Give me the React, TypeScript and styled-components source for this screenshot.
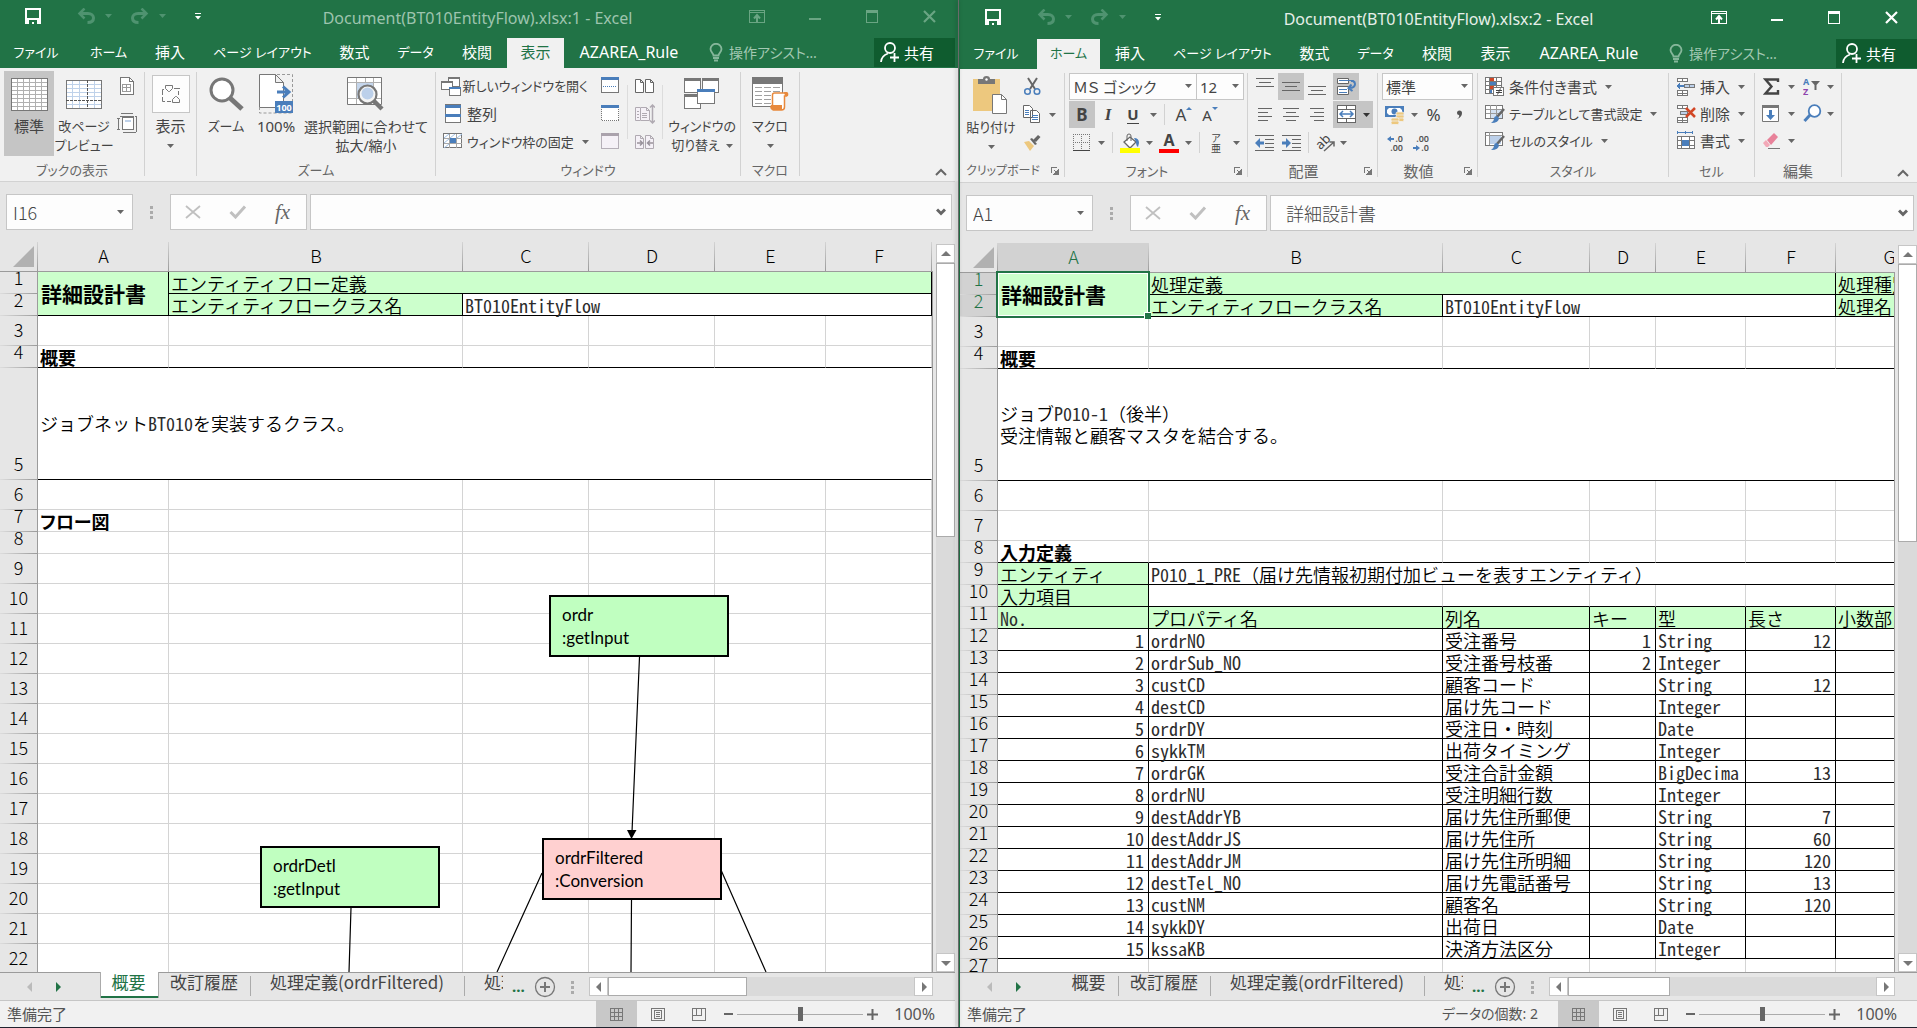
import React from "react";
import styled, { createGlobalStyle, css } from "styled-components";

/* ---------- theme values ---------- */
const ui = '"Noto Sans", "Noto Sans CJK JP", sans-serif';
const jp = '"Noto Sans CJK JP", "Noto Sans", sans-serif';
const mono = '"Noto Sans Mono CJK JP", "Liberation Mono", "Noto Sans CJK JP", monospace';
const green = "#217346";
const grey = "#777777";
const blue = "#4a7ebb";

const Global = createGlobalStyle`
  * { box-sizing: border-box; }
  body { margin: 0; font-family: ${ui}; font-size: 15px; color: #444; overflow: hidden; }
  button, input, select { font: inherit; color: inherit; margin: 0; }
  button { border: 0; padding: 0; background: none; white-space: nowrap; }
  svg { display: block; flex: none; }
`;

/* ---------- windows ---------- */
const Desktop = styled.div`
  height: 100vh;
  display: grid;
  grid-template-columns: minmax(0, 1fr) 1px minmax(0, 1fr);
  padding-bottom: 1px;
  background: #20222e;
`;
const Divider = styled.div`
  background: #6a6a6a;
  box-shadow: -1px 0 4px rgba(0, 0, 0, 0.45);
  z-index: 2;
`;
const WindowFrame = styled.section<{ $active: boolean }>`
  display: flex;
  flex-direction: column;
  min-height: 0;
  min-width: 0;
  overflow: hidden;
  ${(p) =>
    p.$active
      ? css`
          padding-top: 1px;
          border-left: 1px solid ${green};
          background: ${green};
        `
      : css`
          padding-right: 3px;
          background: linear-gradient(${green} 68px, #f1f1f1 68px 181px, #e6e6e6 181px);
        `}
`;

/* ---------- title bar ---------- */
const TitleBar = styled.header`
  flex: none;
  height: 38px;
  display: grid;
  grid-template-columns: 210px 1fr 220px;
  background: ${green};
`;
const QuickAccess = styled.div`
  display: flex;
  align-items: center;
  padding: 0 0 6px 25px;
  gap: 0;
`;
const Slot = styled.button<{ $w: number }>`
  flex: none;
  width: ${(p) => p.$w}px;
  height: 20px;
  display: flex;
  align-items: center;
`;
const LaunchButton = styled(Slot)`
  justify-content: center;
`;
const Title = styled.h1<{ $active: boolean }>`
  margin: 0;
  font-size: 16px;
  font-weight: 400;
  line-height: 37px;
  text-align: center;
  white-space: nowrap;
  padding-left: 10px;
  color: ${(p) => (p.$active ? "#e6efe9" : "#9dc4ae")};
`;
const Controls = styled.div<{ $active: boolean }>`
  display: flex;
  justify-content: flex-end;
  align-items: center;
  padding: 0 18px 6px 0;
  gap: 43px;
  color: ${(p) => (p.$active ? "#ffffff" : "#6aa583")};
`;

/* ---------- ribbon tabs ---------- */
const TabBar = styled.nav`
  flex: none;
  height: 30px;
  display: flex;
  background: ${green};
  color: #ffffff;
`;
const RibbonTab = styled.button<{ $w: number; $on: boolean; $size: number }>`
  flex: none;
  width: ${(p) => p.$w}px;
  display: flex;
  justify-content: center;
  align-items: center;
  padding-bottom: 2px;
  line-height: 28px;
  font-size: ${(p) => p.$size}px;
  font-feature-settings: "palt";
  background: ${(p) => (p.$on ? "#f1f1f1" : "transparent")};
  color: ${(p) => (p.$on ? green : "#ffffff")};
  &:first-child { margin-right: 5px; }
`;
const Tell = styled.button`
  display: flex;
  align-items: center;
  gap: 6px;
  margin-left: 15px;
  padding-bottom: 2px;
  font-size: 14px;
  font-feature-settings: "palt";
  color: #a3c9b3;
`;
const Share = styled.button`
  margin-left: auto;
  width: 81px;
  margin-bottom: 1px;
  display: flex;
  align-items: center;
  gap: 4px;
  padding: 0 0 1px 6px;
  background: #0f5c2f;
  color: #ffffff;
`;

/* ---------- ribbon ---------- */
const RibbonBar = styled.div`
  flex: none;
  height: 114px;
  display: flex;
  background: #f1f1f1;
  border-bottom: 1px solid #d2d2d2;
`;
const Sep = styled.span`
  flex: none;
  width: 1px;
  margin: 4px 0 5px;
  background: #d2d2d2;
`;
const ShortSep = styled.span`
  flex: none;
  width: 1px;
  height: 54px;
  margin: 14px 3px 17px;
  background: #dcdcdc;
`;
const GroupBox = styled.section<{ $w: number }>`
  flex: none;
  width: ${(p) => p.$w}px;
  display: flex;
  flex-direction: column;
`;
const GroupBody = styled.div<{ $pad: number }>`
  flex: 1;
  display: flex;
  align-items: flex-start;
  padding: 3px 0 0 ${(p) => p.$pad}px;
`;
const GroupLabel = styled.footer<{ $size: number }>`
  height: 22px;
  display: flex;
  align-items: center;
  font-size: ${(p) => p.$size}px;
  line-height: 22px;
  font-feature-settings: "palt";
  color: #666;
  & > span { flex: 1; text-align: center; white-space: nowrap; }
`;
const BigButton = styled.button<{ $w: number; $on?: boolean; $size?: number }>`
  flex: none;
  width: ${(p) => p.$w}px;
  height: 85px;
  display: flex;
  flex-direction: column;
  align-items: center;
  background: ${(p) => (p.$on ? "#c5c5c5" : "transparent")};
  font-size: ${(p) => p.$size ?? 15}px;
  line-height: 19px;
  font-feature-settings: "palt";
`;
const IconArea = styled.span`
  height: 46px;
  display: flex;
  align-items: center;
`;
const Line = styled.span`
  height: 19px;
  display: flex;
  align-items: center;
  gap: 6px;
`;
const Framed = styled.span`
  width: 38px;
  height: 38px;
  display: flex;
  align-items: center;
  justify-content: center;
  background: #fdfdfd;
  border: 1px solid #c6c6c6;
`;
const Stack = styled.div<{ $w?: number; $gap?: number }>`
  flex: none;
  width: ${(p) => (p.$w ? p.$w + "px" : "auto")};
  display: flex;
  flex-direction: column;
  gap: ${(p) => p.$gap ?? 1}px;
  padding-top: 1px;
`;
const Row = styled.div`
  display: flex;
  align-items: center;
  height: 27px;
`;
const Tool = styled.button<{ $w: number; $on?: boolean }>`
  flex: none;
  width: ${(p) => p.$w}px;
  height: 27px;
  display: flex;
  align-items: center;
  justify-content: center;
  gap: 6px;
  background: ${(p) => (p.$on ? "#c5c5c5" : "transparent")};
`;
const Glyph = styled.span<{ $bold?: boolean; $italic?: boolean; $under?: boolean; $size?: number }>`
  font-size: ${(p) => p.$size ?? 17}px;
  line-height: 18px;
  font-weight: ${(p) => (p.$bold ? 700 : 400)};
  font-family: ${(p) => (p.$italic ? '"Liberation Serif", serif' : ui)};
  font-style: ${(p) => (p.$italic ? "italic" : "normal")};
  border-bottom: ${(p) => (p.$under ? "1px solid #444" : "0")};
`;
const MiniSep = styled.span<{ $w: number }>`
  flex: none;
  width: ${(p) => p.$w}px;
  height: 21px;
  background: linear-gradient(#d2d2d2, #d2d2d2) center / 1px 100% no-repeat;
`;
const Gap = styled.span`
  width: 3px;
`;
const Item = styled.button<{ $size: number }>`
  height: 27px;
  display: flex;
  align-items: center;
  font-size: ${(p) => p.$size}px;
  font-feature-settings: "palt";
`;
const ItemIcon = styled.span`
  width: 28px;
  display: flex;
  justify-content: center;
`;
const ItemText = styled.span`
  padding-right: 8px;
`;
const Combo = styled.span<{ $w: number }>`
  position: relative;
  flex: none;
  width: ${(p) => p.$w}px;
  height: 27px;
  & + & { margin-left: -1px; }
  select {
    appearance: none;
    width: 100%;
    height: 27px;
    padding: 0 3px;
    border: 1px solid #c6c6c6;
    border-radius: 0;
    background: #fdfdfd;
    font-feature-settings: "palt";
  }
  svg { position: absolute; right: 5px; top: 11px; }
`;
const Collapse = styled.button`
  margin: auto 8px 5px auto;
`;

/* ---------- formula bar ---------- */
const FormulaBar = styled.div`
  flex: none;
  height: 60px;
  display: flex;
  align-items: flex-start;
  padding: 12px 3px 0 6px;
  background: #e6e6e6;
`;
const Box = styled.div<{ $w?: number }>`
  flex: ${(p) => (p.$w ? "none" : 1)};
  width: ${(p) => (p.$w ? p.$w + "px" : "auto")};
  height: 36px;
  display: flex;
  align-items: center;
  background: #fdfdfd;
  border: 1px solid #c6c6c6;
`;
const BoxInput = styled.input<{ $pad: number }>`
  flex: 1;
  min-width: 0;
  width: 0;
  height: 32px;
  border: 0;
  outline: 0;
  background: transparent;
  padding: 0 0 0 ${(p) => p.$pad}px;
  font-family: ${jp};
  font-size: 18px;
  font-weight: 300;
`;
const BoxButton = styled.button<{ $w: number }>`
  flex: none;
  width: ${(p) => p.$w}px;
  height: 34px;
  display: flex;
  align-items: center;
  justify-content: center;
  color: #666;
`;
const Grip = styled.span<{ $w: number; $h: number }>`
  flex: none;
  width: ${(p) => p.$w}px;
  height: ${(p) => p.$h}px;
  display: flex;
  align-items: center;
  justify-content: center;
`;

/* ---------- sheet ---------- */
const SheetArea = styled.div`
  flex: 1;
  min-height: 0;
  display: flex;
  background: #e6e6e6;
  border-bottom: 1px solid #9b9b9b;
`;
const SheetPane = styled.div`
  flex: 1;
  min-width: 0;
  padding-right: 1px;
  background: linear-gradient(#e6e6e6 29px, #9b9b9b 29px);
  display: flex;
`;
const SheetView = styled.div`
  position: relative;
  flex: 1;
  min-width: 0;
  overflow: hidden;
  background: #ffffff;
`;
const Table = styled.table<{ $w: number }>`
  width: ${(p) => p.$w}px;
  table-layout: fixed;
  border-collapse: separate;
  border-spacing: 0;
  color: #000000;
`;
const ColHead = styled.th<{ $on?: boolean }>`
  height: 30px;
  padding: 0 0 4px;
  font-family: ${jp};
  font-size: 18px;
  line-height: 24px;
  font-weight: 300;
  color: ${(p) => (p.$on ? green : "#000")};
  border-bottom: 1px solid #9b9b9b;
  background: linear-gradient(#d4d4d4, #9b9b9b) right / 1px 100% no-repeat, ${(p) => (p.$on ? "#d2d2d2" : "#e6e6e6")};
`;
const Corner = styled(ColHead)`
  padding: 4px 0 3px 12px;
`;
const RowHead = styled.th<{ $on?: boolean }>`
  padding: 0 0 13px;
  vertical-align: bottom;
  font-family: ${jp};
  font-size: 18px;
  line-height: 8px;
  font-weight: 300;
  color: ${(p) => (p.$on ? green : "#000")};
  border-right: 1px solid #9b9b9b;
  background: linear-gradient(to right, #dddddd, #9b9b9b) bottom / 100% 1px no-repeat, ${(p) => (p.$on ? "#d2d2d2" : "#e6e6e6")};
`;
const Tr = styled.tr<{ $h: number }>`
  height: ${(p) => p.$h}px;
`;
const Td = styled.td<{ $fill?: boolean; $b?: boolean; $r?: boolean; $kind?: string; $sel?: boolean }>`
  padding: 1px 4px 0 2px;
  vertical-align: bottom;
  position: ${(p) => (p.$sel ? "relative" : "static")};
  white-space: pre;
  font-family: ${jp};
  font-size: 18px;
  line-height: 20px;
  font-weight: 350;
  background: ${(p) => (p.$fill ? "#ccffcc" : "#ffffff")};
  border-right: 1px solid ${(p) => (p.$r ? "#000" : "#d4d4d4")};
  border-bottom: 1px solid ${(p) => (p.$b ? "#000" : "#d4d4d4")};
  ${(p) =>
    p.$kind === "title" &&
    css`
      font-size: 21px;
      font-weight: 700;
      vertical-align: middle;
      padding: 0 0 2px 3px;
    `}
  ${(p) =>
    p.$kind === "bold" &&
    css`
      font-weight: 700;
      font-feature-settings: "palt";
    `}
  ${(p) => p.$kind === "num" && "text-align: right;"}
  ${(p) =>
    p.$kind === "note" &&
    css`
      vertical-align: middle;
      line-height: 22px;
      padding: 0 4px 2px 2px;
      border-right-color: #fff;
    `}
`;
const HalfWidth = styled.span`
  font-family: ${mono};
  font-weight: 400;
  color: #2c2c2c;
`;
const Selection = styled.span`
  position: absolute;
  inset: -2px;
  border: 2px solid ${green};
  box-shadow: inset 0 0 0 1px #ffffff;
  z-index: 1;
  &::after {
    content: "";
    position: absolute;
    right: -3px;
    bottom: -3px;
    width: 6px;
    height: 6px;
    background: ${green};
    border-left: 1px solid #fff;
    border-top: 1px solid #fff;
  }
`;
const Canvas = styled.div`
  position: absolute;
  inset: 0;
  overflow: hidden;
  pointer-events: none;
`;
const FlowNode = styled.div<{ $x: number; $y: number; $color: string }>`
  position: absolute;
  left: ${(p) => p.$x}px;
  top: ${(p) => p.$y}px;
  width: 180px;
  height: 62px;
  padding: 6px 0 0 11px;
  border: 2px solid #000;
  background: ${(p) => p.$color};
  color: #000;
  font-family: Lato, "Open Sans", sans-serif;
  font-size: 17px;
  line-height: 23px;
  white-space: pre;
`;

/* ---------- scroll bars ---------- */
const VScroll = styled.div`
  flex: none;
  width: 22px;
  padding: 2px 0 0 3px;
  display: flex;
  flex-direction: column;
`;
const HScroll = styled.div`
  flex: 1;
  height: 19px;
  display: flex;
`;
const ScrollButton = styled.button`
  flex: none;
  width: 19px;
  height: 19px;
  display: flex;
  align-items: center;
  justify-content: center;
  background: #fff;
  border: 1px solid #c6c6c6;
`;
const Track = styled.div`
  flex: 1;
  background: #dadada;
`;
const VThumb = styled.div<{ $h: number }>`
  height: ${(p) => p.$h}px;
  background: #fff;
  border: 1px solid #ababab;
`;
const HThumb = styled.div<{ $w: number }>`
  width: ${(p) => p.$w}px;
  height: 19px;
  background: #fff;
  border: 1px solid #ababab;
`;

/* ---------- sheet tabs ---------- */
const SheetTabs = styled.div`
  flex: none;
  height: 28px;
  display: flex;
  padding-right: 22px;
  background: #e6e6e6;
  border-bottom: 1px solid #c6c6c6;
`;
const NavArrows = styled.div`
  flex: none;
  width: 100px;
  display: flex;
  align-items: center;
  padding-left: 25px;
  gap: 18px;
`;
const SheetTab = styled.button<{ $w: number; $on?: boolean; $line?: boolean }>`
  flex: none;
  width: ${(p) => p.$w}px;
  height: 25px;
  font-family: ${jp};
  font-size: 17px;
  line-height: 17px;
  padding: 0 2px 8px 0;
  color: #444;
  background: ${(p) => (p.$line ? "linear-gradient(#ababab, #ababab) right 3px / 1px 20px no-repeat" : "none")};
  ${(p) =>
    p.$on &&
    css`
      height: 26px;
      margin-top: -1px;
      padding-bottom: 7px;
      position: relative;
      color: ${green};
      background: #fff;
      border: solid #ababab;
      border-width: 0 1px;
      box-shadow: inset 0 -2px 0 ${green};
    `}
`;
const TabClip = styled.button`
  flex: none;
  width: 19px;
  margin-left: 19px;
  height: 21px;
  overflow: hidden;
  text-align: left;
  font-family: ${jp};
  font-size: 17px;
  line-height: 17px;
  padding-bottom: 4px;
`;
const More = styled.button`
  flex: none;
  width: 31px;
  color: ${green};
  font-weight: 700;
  line-height: 22px;
  height: 26px;
`;
const AddSheet = styled.button`
  flex: none;
  display: flex;
  align-items: center;
  padding-top: 1px;
`;
const HArea = styled.div`
  flex: 1;
  display: flex;
  padding-top: 4px;
`;

/* ---------- status bar ---------- */
const StatusBar = styled.footer`
  flex: none;
  height: 26px;
  display: flex;
  align-items: center;
  padding: 0 20px 0 7px;
  background: #f1f1f1;
  color: #555;
  line-height: 24px;
`;
const Count = styled.span`
  margin-left: auto;
  margin-right: 20px;
  font-size: 14px;
  font-feature-settings: "palt";
`;
const ViewButton = styled.button<{ $on?: boolean }>`
  flex: none;
  width: 41px;
  height: 26px;
  display: flex;
  align-items: center;
  justify-content: center;
  background: ${(p) => (p.$on ? "#c8c8c8" : "transparent")};
`;
const ZoomStep = styled.button`
  width: 18px;
  height: 26px;
  display: flex;
  align-items: center;
  justify-content: center;
`;
const Slider = styled.input`
  appearance: none;
  width: 126px;
  height: 14px;
  background: linear-gradient(#ababab, #ababab) center / 100% 1px no-repeat;
  &::-webkit-slider-thumb {
    appearance: none;
    width: 5px;
    height: 14px;
    background: #666;
  }
`;
const Percent = styled.span`
  width: 54px;
  font-size: 16px;
  text-align: right;
`;

/* ---------- small glyph icons ---------- */
const Caret = ({ c = "#666" }: { c?: string }) => (
  <svg width="7" height="4" viewBox="0 0 7 4"><path d="M0 0h7L3.500 4z" fill={c} /></svg>
);
const Tri = ({ dir, c = "#777" }: { dir: "u" | "d" | "l" | "r"; c?: string }) => {
  const d = { u: "M5 2l5 5H0z", d: "M0 3h10L5 8z", l: "M7 0v10L2 5z", r: "M3 0v10l5-5z" }[dir];
  return <svg width="10" height="10" viewBox="0 0 10 10"><path d={d} fill={c} /></svg>;
};
const Dots = ({ s = 3, g = 5 }) => (
  <svg width={s} height={s + g * 2} fill="#ababab" shapeRendering="crispEdges">
    <rect width={s} height={s} /><rect y={g} width={s} height={s} /><rect y={g * 2} width={s} height={s} />
  </svg>
);
const SaveIcon = () => (
  <svg width="16" height="16" viewBox="0 0 16 16" shapeRendering="crispEdges">
    <path fill="#fff" fillRule="evenodd" d="M0 0h16v16H0zM2 2v8h12V2zM4 12v4h3v-2h2v2h3v-4z" />
  </svg>
);
const UndoIcon = ({ flip = false }) => (
  <svg width="18" height="16" viewBox="0 0 18 16" fill="none" stroke="#4f9370" strokeWidth="3">
    <g transform={flip ? "matrix(-1 0 0 1 18 0)" : undefined}>
      <path d="M3 5.500h8c3.500 0 5.500 2 5.500 4.500 0 3-2.500 4.500-6 4.500" /><path d="M7.500 0.500l-5 5 5 5" strokeWidth="2.500" />
    </g>
  </svg>
);
const RibbonOptions = () => (
  <svg width="16" height="13" viewBox="0 0 16 13" fill="none" stroke="currentColor" shapeRendering="crispEdges">
    <path d="M.5.5h15v12H.5zM1 2.500h14" /><path d="M8 12V6M5 8.500L8 5l3 3.500" strokeWidth="2" shapeRendering="auto" />
  </svg>
);
const WinControls = () => (
  <>
    <button aria-label="リボンの表示オプション"><RibbonOptions /></button>
    <button aria-label="最小化"><svg width="14" height="13"><path d="M1 8h12v2H1z" fill="currentColor" /></svg></button>
    <button aria-label="最大化"><svg width="14" height="13" fill="none" stroke="currentColor" shapeRendering="crispEdges"><path d="M1.500.5h11v12h-11z" /><path d="M1 1.500h12" strokeWidth="3" /></svg></button>
    <button aria-label="閉じる"><svg width="15" height="13" stroke="currentColor" strokeWidth="2.200"><path d="M2 1l11 11M13 1L2 12" /></svg></button>
  </>
);
const Bulb = () => (
  <svg width="14" height="19" viewBox="0 0 14 19" fill="none" stroke="#86b79b" strokeWidth="1.800">
    <path d="M4.500 12.500C4.500 10 1.500 9.500 1.500 6a5.500 5.200 0 0111 0c0 3.500-3 4-3 6.500z" /><path d="M4 15h6M5 17.500h4" strokeWidth="2" />
  </svg>
);
const Person = () => (
  <svg width="20" height="20" viewBox="0 0 20 20" fill="none" stroke="#fff" strokeWidth="1.800">
    <circle cx="10" cy="6" r="5" /><path d="M1 20c.3-5 2.500-7 7-8.500M10 15.500h9M14.500 11v9" />
  </svg>
);
const ChevronUp = () => <svg width="12" height="8" fill="none" stroke="#666" strokeWidth="2"><path d="M1 7l5-5 5 5" /></svg>;
const ChevronDown = () => <svg width="10" height="8" fill="none" stroke="#666" strokeWidth="3"><path d="M1 1.500l4 4 4-4" /></svg>;
const Launcher = () => (
  <svg width="8" height="8" viewBox="0 0 8 8" fill="none" stroke="#777" shapeRendering="crispEdges"><path d="M.5 6V.5H6" /><path d="M3 3l3 3" /><path d="M7.500 3v4.500H3z" fill="#777" /></svg>
);

/* ---------- view ribbon icons ---------- */
const GridIcon = () => (
  <svg width="37" height="33" viewBox="0 0 37 33" fill="none" shapeRendering="crispEdges">
    <rect width="37" height="33" fill="#fff" /><path stroke="#b0b0b0" d="M6.500 0v33M12.500 0v33M18.500 0v33M24.500 0v33M30.500 0v33M0 4.500h37M0 8.500h37M0 12.500h37M0 16.500h37M0 20.500h37M0 24.500h37M0 28.500h37" />
    <path stroke={grey} d="M.5.5h36v32H.5z" />
  </svg>
);
const PageBreakIcon = () => (
  <svg width="36" height="29" viewBox="0 0 36 29" fill="none" shapeRendering="crispEdges">
    <rect width="36" height="29" fill="#fff" /><path stroke="#bfd2ea" d="M6.500 0v29M13.500 0v29M28.500 0v29M0 4.500h36M0 8.500h36M0 12.500h36M0 16.500h36M0 24.500h36" />
    <path stroke={grey} d="M.5.500h35v28H.5z" /><path stroke="#555" d="M21.500 0v29M0 20.500h36" strokeDasharray="3 1" />
  </svg>
);
const PageLayoutIcon = () => (
  <svg width="20" height="20" viewBox="0 0 20 20" fill="none" stroke={grey} shapeRendering="crispEdges">
    <path fill="#fff" d="M3.500 1.500h9l4 4v13h-13z" /><path d="M12.500 1.500v4h4" /><path stroke="#9a9a9a" d="M5.500 8.500h8v7h-8zM9.500 8v8M5 11.500h9" />
  </svg>
);
const CustomViewIcon = () => (
  <svg width="20" height="20" viewBox="0 0 20 20" fill="none" stroke={grey} shapeRendering="crispEdges">
    <path d="M4 .5h12M3 3.500h14M1.500 5v11M0 5.500h3M0 16.500h3M19.500 3v16M6 19.500h13M18 3.500h2" /><path fill="#fff" d="M5.500 4.500h11v12h-11z" /><path stroke="#bfd2ea" strokeWidth="2" d="M8 8h6" />
  </svg>
);
const ShapesIcon = () => (
  <svg width="20" height="20" viewBox="0 0 20 20" fill="none" stroke={grey}>
    <path d="M4.500 1.500v3l3 3h1l3-3v-3zM11.500 18.500v-3l3-3h1l3 3v3z" /><path d="M3 5.500H1.500v12H10M13 4.500h6M17.500 7v4" strokeDasharray="7 2" />
  </svg>
);
const MagnifierIcon = () => (
  <svg width="35" height="35" viewBox="0 0 35 35" fill="none" stroke={grey}>
    <path d="M21 21l12 11" strokeWidth="5" /><circle cx="13" cy="13" r="11" fill="#fff" strokeWidth="3" />
  </svg>
);
const Zoom100Icon = () => (
  <svg width="34" height="40" viewBox="0 0 34 40" fill="none">
    <path stroke="#999" strokeDasharray="3 2" d="M18 .5h15.500V39H.5V34" /><path fill="#fff" stroke={grey} d="M.5.500h16l8 8v25H.500zM16.500.500v8h8" />
    <path d="M18 18h11M24 12.500l6 5.500-6 5.500" stroke={blue} strokeWidth="3" /><rect x="16" y="27" width="18" height="12" fill={blue} />
    <text x="25" y="37" fontSize="9" fontFamily="Noto Sans" fontWeight="700" fill="#fff" textAnchor="middle">100</text>
  </svg>
);
const ZoomSelIcon = () => (
  <svg width="38" height="36" viewBox="0 0 38 36" fill="none">
    <path fill="#fff" stroke={grey} d="M.5 1.500h34v27H.500z" /><path stroke="#b0b0b0" d="M9.500 2v26M18.500 2v26M26.500 2v26M1 6.500h33M1 22.500h33" /><rect x="10" y="7" width="16" height="15" fill="#c5d6ec" />
    <path d="M27 25l8 8" stroke={grey} strokeWidth="4.500" /><circle cx="20.500" cy="18.500" r="9" fill="#f4f4f4" stroke={grey} strokeWidth="2.200" /><circle cx="20.500" cy="17.500" r="6" fill="#bcd0ea" />
  </svg>
);
const NewWindowIcon = () => (
  <svg width="20" height="20" viewBox="0 0 20 20" fill="#fff" stroke={grey} shapeRendering="crispEdges">
    <path d="M7.500 1.500h11v9h-11z" /><path d="M7 2h12" strokeWidth="2" /><path d="M.5 5.500h11v8H.500z" /><path d="M0 6h12" strokeWidth="2" /><path d="M8.500 11.500h11v8h-11z" /><path d="M8 12h12" stroke={blue} strokeWidth="2" />
  </svg>
);
const ArrangeIcon = () => (
  <svg width="18" height="20" viewBox="0 0 18 20" fill="#fff" stroke={grey} shapeRendering="crispEdges">
    <path d="M1.500.5h15v18h-15z" /><path d="M1 2h16M1 11h16" stroke={blue} strokeWidth="3" />
  </svg>
);
const FreezeIcon = () => (
  <svg width="20" height="17" viewBox="0 0 20 17" fill="none" stroke={grey} shapeRendering="crispEdges">
    <path fill="#fff" d="M.5.5h18v14H.5z" /><path stroke="#a8a8a8" d="M6.500 1v14M13.500 1v14M1 5.500h18M1 10.500h18" /><path stroke="#9fc0e6" d="M1 5l5-4M7 5l5-4M14 5l5-4M1 10l5-4M1 15l5-4" shapeRendering="auto" /><rect x="7" y="5" width="6" height="5" fill={blue} stroke="none" />
  </svg>
);
const SplitIcon = ({ kind }: { kind: number }) => (
  <svg width="19" height="17" viewBox="0 0 19 17" fill={kind === 2 ? "#f5f1f7" : "#fff"} shapeRendering="crispEdges">
    <path stroke={kind === 2 ? "#b5afb8" : grey} strokeDasharray={kind === 1 ? "1 1" : undefined} d="M.5.5h17v15H.5z" />
    <path stroke={kind === 2 ? "#aaa2ac" : blue} strokeWidth="3" d="M0 1.500h18" />{kind === 0 && <path stroke={blue} strokeDasharray="1 1" d="M2 9.500h14" />}
  </svg>
);
const PagesIcon = ({ kind }: { kind: number }) => (
  <svg width="20" height="20" viewBox="0 0 20 20" fill={kind ? "#f5f1f7" : "#fff"} stroke={kind ? "#b0aab2" : "#666"}>
    {kind === 1 ? (
      <><path d="M5 3.500H.5v13H5M5.500 3.500h6l3 3v10h-9zM11.500 3.500v3h3M7 9.500h5M7 11.500h5M7 13.500h5M2 7.500h2M2 10.500h2M2 13.500h2" /><path fill="none" strokeWidth="1.500" d="M17.500 1v18M15 3.500L17.500 1 20 3.500M15 16.500l2.500 2.500 2.500-2.500" /></>
    ) : (
      <><path d="M.5 3.500h5l3 3v10h-8zM5.500 3.500v3h3M10.500 3.500h5l3 3v10h-8zM15.500 3.500v3h3" />{kind === 2 && <path fill="none" stroke="#99939b" strokeWidth="1.500" d="M2 11h5M5 8.500L7.500 11 5 13.500M18 11h-5M15 8.500L12.500 11l2.500 2.500" />}</>
    )}
  </svg>
);
const SwitchIcon = () => (
  <svg width="36" height="32" viewBox="0 0 36 32" fill="#fff" stroke={grey} shapeRendering="crispEdges">
    <path d="M.5 1.500h16v13H.500zM18.500 1.500h16v13h-16zM.5 17.500h16v13H.500z" /><path d="M0 1.500h17M18 1.500h17M0 17.500h17" strokeWidth="3" /><path d="M13.500 12.500h17v13h-17z" /><path d="M13 12.500h18" stroke={blue} strokeWidth="3" />
  </svg>
);
const MacroIcon = () => (
  <svg width="37" height="34" viewBox="0 0 37 34" fill="none">
    <path fill="#fff" stroke={grey} d="M.5.500h30v29H.500z" /><path fill={grey} d="M0 0h31v7H0z" /><path stroke="#a0a0a0" strokeDasharray="7 2" d="M3 10.500h26M3 14.500h26M3 18.500h26M3 22.500h26M3 26.500h26" />
    <path fill="#fff" stroke="#e8893c" strokeWidth="1.500" d="M20.500 29V18q0-2 2-2h12v3h-2v11q0 3-3 3h-9" /><path fill="#e8893c" d="M19 28h11v5H20q-3-2-1-5zM32 15h3q2 1 1 4h-3z" />
  </svg>
);

/* ---------- home ribbon icons ---------- */
const PasteIcon = () => (
  <svg width="36" height="38" viewBox="0 0 36 38">
    <path fill="#edc87e" d="M0 3h27v32H0z" /><path fill={grey} d="M5 8V3h5q0-3 3.500-3T17 3h5v5z" /><circle cx="13.500" cy="3.500" r="1.200" fill="#fff" />
    <path fill="#fff" stroke={grey} d="M19.500 18.500h9l5 5v14h-14z" /><path fill="none" stroke={grey} d="M28.500 18.500v5h5" />
  </svg>
);
const CutIcon = () => (
  <svg width="17" height="19" viewBox="0 0 17 19" fill="none">
    <path d="M4 1l7 11M13 1L6 12" stroke="#666" strokeWidth="2" /><circle cx="3.500" cy="14.500" r="2.800" stroke={blue} strokeWidth="1.500" /><circle cx="13" cy="14.500" r="2.800" stroke={blue} strokeWidth="1.500" />
  </svg>
);
const CopyIcon = () => (
  <svg width="18" height="19" viewBox="0 0 18 19" fill="#fff" stroke="#666">
    <path d="M.5.500h6l3 3v9h-9zM7.500 5.500h6l3 3v9h-9z" /><path stroke={blue} d="M2 5.500h4M2 7.500h4M2 9.500h4M9 10.500h6M9 12.500h6M9 14.500h6" />
  </svg>
);
const BrushIcon = () => (
  <svg width="18" height="16" viewBox="0 0 18 16">
    <path fill="#edc87e" d="M1 7l5-1 5 5-4 5z" /><path fill="#666" d="M7 4l2-1 5 6-2 1zM10 5l5-5 2.500 2L13 7z" />
  </svg>
);
const BordersIcon = () => (
  <svg width="18" height="18" viewBox="0 0 18 18" fill="none" stroke="#777" shapeRendering="crispEdges">
    <path strokeDasharray="1 1" d="M0 .5h17M.5 0v17M16.500 0v17M8.500 0v17M0 8.500h17" /><path stroke="#444" d="M0 16.500h17" />
  </svg>
);
const FillIcon = () => (
  <svg width="20" height="20" viewBox="0 0 20 20" fill="none">
    <path d="M4 9l6-5 6 5-6 6z" fill="#fff" stroke="#666" strokeWidth="1.300" /><path d="M7 8V3q0-2 2-2t2 2v5" stroke="#666" /><path d="M14 5q5 0 5 5l-1 4q-2-1-2-5z" fill={blue} /><path fill="#ff0" d="M0 15h20v5H0z" />
  </svg>
);
const ColorStrip = styled.span`
  width: 20px;
  height: 20px;
  border-bottom: 4px solid #ff0000;
  font-weight: 700;
  font-size: 16px;
  line-height: 15px;
`;
const Ruby = styled.span`
  display: grid;
  font-size: 10px;
  line-height: 10px;
`;
const SizeA = ({ up }: { up: boolean }) => (
  <>
    <Glyph $size={up ? 17 : 15}>A</Glyph>
    <svg width="6" height="18"><path d={up ? "M0 4h6L3 1z" : "M0 1h6L3 4z"} fill={blue} /></svg>
  </>
);
const SizeTool = styled(Tool)`
  gap: 0;
`;
const Lines = ({ l, y = 0, c = "#666" }: { l: number[][]; y?: number; c?: string }) => (
  <svg width="18" height="18" viewBox="0 0 18 18" stroke={c} shapeRendering="crispEdges">
    {l.map(([a, b], i) => <path key={i} d={`M${a} ${y + i * 4 + 0.5}H${b}`} />)}
  </svg>
);
const IndentIcon = ({ left }: { left: boolean }) => (
  <svg width="19" height="18" viewBox="0 0 19 18">
    <path stroke="#666" shapeRendering="crispEdges" d="M0 1.500h19M10 5.500h9M10 9.500h9M10 13.500h9M0 16.500h19" /><path d={left ? "M0 9l5-5v3.500h4v3H5V14z" : "M9 9L4 4v3.500H0v3h4V14z"} fill={blue} />
  </svg>
);
const WrapIcon = () => (
  <svg width="19" height="19" viewBox="0 0 19 19" fill="#fff" stroke="#666">
    <path d="M.5 1.500h11v5H.500zM.5 9.500h11v8H.500z" /><path stroke={blue} d="M2 3.500h14M2 12.500h8M2 15.500h8" /><path fill="none" stroke={blue} strokeWidth="2" d="M14 4h2q2 1 2 3 0 4-6 4M14.500 7.500L11.500 11l4 3" />
  </svg>
);
const MergeIcon = () => (
  <svg width="20" height="19" viewBox="0 0 20 19" fill="#fff" stroke="#666" shapeRendering="crispEdges">
    <path d="M.5.500h18v17H.500zM.5 4.500h18M.5 13.500h18M9.500 0v4M9.500 14v4" /><path fill="none" stroke={blue} shapeRendering="auto" strokeWidth="1.500" d="M3 9h13M6 6L3 9l3 3M13 6l3 3-3 3" />
  </svg>
);
const OrientIcon = () => (
  <svg width="20" height="18" viewBox="0 0 20 18">
    <text x="2" y="14" transform="rotate(-45 6 12)" fontSize="13" fontFamily="Noto Sans" fill="#444">ab</text><path d="M8 17l10-9M13.500 8H18v4.500" fill="none" stroke="#666" strokeWidth="1.500" />
  </svg>
);
const MoneyIcon = () => (
  <svg width="20" height="20" viewBox="0 0 20 20">
    <path fill={blue} d="M0 1h19v11H0z" /><path fill="#fff" d="M2 5l2-2h11l2 2v3l-2 2H4L2 8z" /><circle cx="9.500" cy="6.500" r="3" fill={blue} />
    <g fill="#edc87e" stroke="#f1f1f1" strokeWidth=".8"><rect x="11" y="7" width="8" height="3.500" rx="1.500" /><rect x="11" y="10" width="8" height="3.500" rx="1.500" /><rect x="11" y="13" width="8" height="3.500" rx="1.500" /><rect x="6" y="13" width="8" height="3.500" rx="1.500" /><rect x="6" y="16" width="8" height="3.500" rx="1.500" /></g>
  </svg>
);
const Decimal = ({ more }: { more: boolean }) => (
  <svg width="18" height="18" viewBox="0 0 18 18" fontFamily="Noto Sans" fontSize="9" fontWeight="600" fill="#555">
    <text x="17" y="8" textAnchor="end">{more ? ".0" : ".00"}</text><text x="17" y="17" textAnchor="end">{more ? ".00" : ".0"}</text>
    <path fill={blue} d={more ? "M1 5l4-3v2h3v2H5v2z" : "M8 14l-4-3v2H1v2h3v2z"} />
  </svg>
);
const CondIcon = () => (
  <svg width="20" height="20" viewBox="0 0 20 20" fill="#fff" stroke="#777" shapeRendering="crispEdges">
    <path d="M.5.500h16v16H.500zM.5 4.500h16M.5 8.500h16M.5 12.500h16M4.500 0v17M11.500 0v17" /><path stroke="none" fill="#d24726" d="M5 1h4v3H5zM5 9h4v3H5z" /><path stroke="none" fill={blue} d="M5 5h6v3H5zM5 13h2v3H5z" /><path d="M8.500 10.500h10v8h-10z" /><path stroke="#444" d="M11 13.500h6M11 15.500h6" /><path stroke="#444" shapeRendering="auto" d="M15.500 11.500l-3 6" />
  </svg>
);
const StyleIcon = ({ single = false }) => (
  <svg width="20" height="20" viewBox="0 0 20 20" fill="#fff" stroke="#777">
    <path shapeRendering="crispEdges" d="M.5 1.500h17v13H.500z" />{single ? <><path stroke="#999" d="M.5 4.500h17M4.500 1v13" /><rect x="5" y="5" width="11" height="8" fill="#bcd0ea" stroke="none" /></> : <><rect x="5" y="5" width="12" height="9" fill="#d3e1f2" stroke="none" /><path stroke="#999" shapeRendering="crispEdges" d="M.5 5.500h17M.5 9.500h17M5.500 1v13M11.500 1v13" /></>}
    <path stroke="#666" strokeWidth="2.500" d="M19 5l-7 8" /><path fill={blue} stroke="none" d="M12 12l2 2q0 5-8 5 3-2 3-4 0-3 3-3z" />
  </svg>
);
const CellIcon = ({ kind }: { kind: number }) => (
  <svg width="20" height="20" viewBox="0 0 20 20" fill="#fff" stroke="#777" shapeRendering="crispEdges">
    {kind < 2 ? (
      <><path d="M1.500 1.500h10v3h-10zM6.500 1v3M1.500 13.500h10v5h-10zM6.500 13v6M1 16h10" /><path fill="#bcd0ea" d={kind ? "M4.500 7.500h7v3h-7z" : "M8.500 7.500h10v3h-10zM13.500 7v4"} />
        {kind ? <path stroke="#d24726" strokeWidth="2.500" shapeRendering="auto" d="M10 4l9 9M19 4l-9 9" /> : <path fill={blue} stroke="none" d="M0 9l4-3v2h4v2H4v2z" />}</>
    ) : (
      <><path d="M1.500 5.500h17v12h-17zM1 9.500h17M1 14.500h17M5.500 5v13M13.500 5v13" /><rect x="6" y="9" width="7" height="6" fill={blue} stroke="none" /><path stroke={blue} d="M1 1.500h16M1.500 0v3M16.500 0v3M9 0v3" /></>
    )}
  </svg>
);
const SortIcon = () => (
  <svg width="18" height="20" viewBox="0 0 18 20" fontFamily="Noto Sans" fontSize="9" fontWeight="700">
    <text x="0" y="8" fill={blue}>A</text><text x="0" y="18" fill="#8e44ad">Z</text><path fill="#666" d="M8 4h9l-3.500 4v5h-2V8z" />
  </svg>
);
const FillDown = () => (
  <svg width="18" height="18" viewBox="0 0 18 18"><path fill="#fff" stroke="#777" d="M.5.500h16v16H.500z" /><path fill="#777" d="M0 0h17v3H0z" /><path fill={blue} d="M7 5h3v5h3l-4.500 5L4 10h3z" /></svg>
);
const FindIcon = () => (
  <svg width="19" height="19" viewBox="0 0 19 19" fill="none" stroke={blue}><circle cx="11.500" cy="7" r="5.800" fill="#fff" strokeWidth="1.800" /><path d="M7 11l-5.500 6" strokeWidth="3" /></svg>
);
const EraserIcon = () => (
  <svg width="19" height="18" viewBox="0 0 19 18"><path fill="#e8829a" d="M5 8l7-7 4 4-7 8z" /><path fill="#f3a9b8" d="M1 11l3-3 4 5-2 2H4z" /><path stroke="#777" d="M6 16.500h12" /></svg>
);

/* ---------- shared pieces ---------- */
const Group = ({ w, label, size = 13, pad = 0, launch, children }: { w: number; label?: string; size?: number; pad?: number; launch?: boolean; children: React.ReactNode }) => (
  <>
    <GroupBox $w={w}>
      <GroupBody $pad={pad}>{children}</GroupBody>
      <GroupLabel $size={size}><span>{label}</span>{launch && <LaunchButton $w={18} aria-label={label + "の詳細"}><Launcher /></LaunchButton>}</GroupLabel>
    </GroupBox>
    <Sep />
  </>
);
const Drop = ({ w, label }: { w: number; label: string }) => <Tool $w={w} aria-label={label}><Caret /></Tool>;
const Select = ({ w, label, value }: { w: number; label: string; value: string }) => (
  <Combo $w={w}><select aria-label={label} defaultValue={value}><option>{value}</option></select><Caret /></Combo>
);
const ListItem = ({ icon, text, drop, size = 15 }: { icon: React.ReactNode; text: string; drop?: boolean; size?: number }) => (
  <Item $size={size}><ItemIcon>{icon}</ItemIcon><ItemText>{text}</ItemText>{drop && <Caret />}</Item>
);

const ViewRibbon = () => (
  <RibbonBar>
    <Group w={144} label="ブックの表示" pad={4}>
      <BigButton $w={50} $on><IconArea><GridIcon /></IconArea><Line>標準</Line></BigButton>
      <BigButton $w={60} $size={13}><IconArea><PageBreakIcon /></IconArea><Line>改ページ</Line><Line>プレビュー</Line></BigButton>
      <Stack $w={26} $gap={10}>
        <Tool $w={26} aria-label="ページ レイアウト"><PageLayoutIcon /></Tool>
        <Tool $w={26} aria-label="ユーザー設定のビュー"><CustomViewIcon /></Tool>
      </Stack>
    </Group>
    <Group w={51}>
      <BigButton $w={51}><IconArea><Framed><ShapesIcon /></Framed></IconArea><Line>表示</Line><Line><Caret /></Line></BigButton>
    </Group>
    <Group w={238} label="ズーム" pad={4}>
      <BigButton $w={50} $size={13}><IconArea><MagnifierIcon /></IconArea><Line>ズーム</Line></BigButton>
      <BigButton $w={50}><IconArea><Zoom100Icon /></IconArea><Line>100%</Line></BigButton>
      <BigButton $w={130} $size={14}><IconArea><ZoomSelIcon /></IconArea><Line>選択範囲に合わせて</Line><Line>拡大/縮小</Line></BigButton>
    </Group>
    <Group w={304} label="ウィンドウ" pad={3}>
      <Stack $w={157}>
        <ListItem size={13} icon={<NewWindowIcon />} text="新しいウィンドウを開く" />
        <ListItem icon={<ArrangeIcon />} text="整列" />
        <ListItem size={13} icon={<FreezeIcon />} text="ウィンドウ枠の固定" drop />
      </Stack>
      <Stack>
        <Tool $w={28} aria-label="分割"><SplitIcon kind={0} /></Tool>
        <Tool $w={28} aria-label="表示しない"><SplitIcon kind={1} /></Tool>
        <Tool $w={28} aria-label="再表示"><SplitIcon kind={2} /></Tool>
      </Stack>
      <ShortSep />
      <Stack>
        <Tool $w={28} aria-label="並べて比較"><PagesIcon kind={0} /></Tool>
        <Tool $w={28} aria-label="同時にスクロール"><PagesIcon kind={1} /></Tool>
        <Tool $w={28} aria-label="位置を元に戻す"><PagesIcon kind={2} /></Tool>
      </Stack>
      <ShortSep />
      <BigButton $w={72} $size={13}><IconArea><SwitchIcon /></IconArea><Line>ウィンドウの</Line><Line>切り替え<Caret /></Line></BigButton>
    </Group>
    <Group w={58} label="マクロ">
      <BigButton $w={58} $size={13}><IconArea><MacroIcon /></IconArea><Line>マクロ</Line><Line><Caret /></Line></BigButton>
    </Group>
    <Collapse aria-label="リボンを折りたたむ"><ChevronUp /></Collapse>
  </RibbonBar>
);

const HomeRibbon = () => (
  <RibbonBar>
    <Group w={104} label="クリップボード" size={12} pad={1} launch>
      <BigButton $w={60} $size={13}><IconArea><PasteIcon /></IconArea><Line>貼り付け</Line><Line><Caret /></Line></BigButton>
      <Stack>
        <Row><Tool $w={22} aria-label="切り取り"><CutIcon /></Tool></Row>
        <Row><Tool $w={22} aria-label="コピー"><CopyIcon /></Tool><Drop w={18} label="コピーのオプション" /></Row>
        <Row><Tool $w={22} aria-label="書式のコピー"><BrushIcon /></Tool></Row>
      </Stack>
    </Group>
    <Group w={182} label="フォント" pad={4} launch>
      <Stack>
        <Row><Select w={128} label="フォント名" value="ＭＳ ゴシック" /><Select w={48} label="フォント サイズ" value="12" /></Row>
        <Row>
          <Tool $w={26} $on aria-label="太字"><Glyph $bold>B</Glyph></Tool>
          <Tool $w={26} aria-label="斜体"><Glyph $bold $italic>I</Glyph></Tool>
          <Tool $w={24} aria-label="下線"><Glyph $bold $under $size={15}>U</Glyph></Tool>
          <Drop w={16} label="下線の種類" /><MiniSep $w={7} />
          <SizeTool $w={32} aria-label="拡大"><SizeA up /></SizeTool>
          <SizeTool $w={20} aria-label="縮小"><SizeA up={false} /></SizeTool>
        </Row>
        <Row>
          <Tool $w={25} aria-label="罫線"><BordersIcon /></Tool><Drop w={14} label="罫線の種類" /><MiniSep $w={8} />
          <Tool $w={28} aria-label="塗りつぶし"><FillIcon /></Tool><Drop w={10} label="塗りつぶしの色" />
          <Tool $w={30} aria-label="文字色"><ColorStrip>A</ColorStrip></Tool><Drop w={8} label="フォントの色" /><MiniSep $w={14} />
          <Tool $w={20} aria-label="ふりがな"><Ruby><span>ア</span><span>亜</span></Ruby></Tool><Drop w={20} label="ふりがなの設定" />
        </Row>
      </Stack>
    </Group>
    <Group w={129} label="配置" size={15} pad={3} launch>
      <Stack>
        <Row>
          <Tool $w={27} aria-label="上揃え"><Lines l={[[0, 18], [3, 15], [0, 18]]} /></Tool>
          <Tool $w={26} $on aria-label="上下中央揃え"><Lines y={4} l={[[0, 18], [3, 15], [0, 18]]} /></Tool>
          <Tool $w={26} aria-label="下揃え"><Lines y={8} l={[[0, 18], [3, 15], [0, 18]]} /></Tool>
          <Gap /><Tool $w={26} $on aria-label="折り返して全体を表示する"><WrapIcon /></Tool>
        </Row>
        <Row>
          <Tool $w={27} aria-label="左揃え"><Lines y={2} l={[[2, 16], [2, 12], [2, 16], [2, 12]]} /></Tool>
          <Tool $w={26} aria-label="中央揃え"><Lines y={2} l={[[1, 17], [4, 14], [1, 17], [4, 14]]} /></Tool>
          <Tool $w={26} aria-label="右揃え"><Lines y={2} l={[[2, 16], [6, 16], [2, 16], [6, 16]]} /></Tool>
          <Gap /><Tool $w={40} $on aria-label="セルを結合して中央揃え"><MergeIcon /><Caret c="#333" /></Tool>
        </Row>
        <Row>
          <Tool $w={27} aria-label="インデントを減らす"><IndentIcon left /></Tool>
          <Tool $w={26} aria-label="インデントを増やす"><IndentIcon left={false} /></Tool><MiniSep $w={9} />
          <Tool $w={26} aria-label="方向"><OrientIcon /></Tool><Drop w={8} label="方向の種類" />
        </Row>
      </Stack>
    </Group>
    <Group w={99} label="数値" size={15} pad={4} launch>
      <Stack>
        <Row><Select w={91} label="表示形式" value="標準" /></Row>
        <Row>
          <Tool $w={25} aria-label="通貨"><MoneyIcon /></Tool><Drop w={14} label="通貨の種類" />
          <Tool $w={25} aria-label="パーセント"><Glyph>%</Glyph></Tool><Tool $w={27} aria-label="桁区切り"><svg width="7" height="10"><path d="M1 3a2.500 2.500 0 115 0q0 4-5 6 3-2 2-4Q1 5 1 3z" fill="#555" /></svg></Tool>
        </Row>
        <Row><Tool $w={25} aria-label="小数点以下を増やす"><Decimal more /></Tool><Tool $w={27} aria-label="小数点以下を減らす"><Decimal more={false} /></Tool></Row>
      </Stack>
    </Group>
    <Group w={190} label="スタイル" pad={3}>
      <Stack $gap={0}>
        <ListItem size={15} icon={<CondIcon />} text="条件付き書式" drop />
        <ListItem size={13} icon={<StyleIcon />} text="テーブルとして書式設定" drop />
        <ListItem size={13} icon={<StyleIcon single />} text="セルのスタイル" drop />
      </Stack>
    </Group>
    <Group w={85} label="セル" pad={3}>
      <Stack $gap={0}>
        <ListItem icon={<CellIcon kind={0} />} text="挿入" drop />
        <ListItem icon={<CellIcon kind={1} />} text="削除" drop />
        <ListItem icon={<CellIcon kind={2} />} text="書式" drop />
      </Stack>
    </Group>
    <Group w={86} label="編集" size={15} pad={3}>
      <Stack $gap={0}>
        <Row><Tool $w={26} aria-label="合計"><svg width="17" height="17" fill="none" stroke="#444"><path d="M15 4V1.500H2.500l6 7-6 7H15V12" strokeWidth="2.400" /></svg></Tool><Drop w={14} label="集計方法" /><Tool $w={28} aria-label="並べ替えとフィルター"><SortIcon /></Tool><Drop w={8} label="並べ替えの種類" /></Row>
        <Row><Tool $w={26} aria-label="フィル"><FillDown /></Tool><Drop w={14} label="フィルの種類" /><Tool $w={28} aria-label="検索と選択"><FindIcon /></Tool><Drop w={8} label="検索の種類" /></Row>
        <Row><Tool $w={26} aria-label="クリア"><EraserIcon /></Tool><Drop w={14} label="クリアの種類" /></Row>
      </Stack>
    </Group>
    <Collapse aria-label="リボンを折りたたむ"><ChevronUp /></Collapse>
  </RibbonBar>
);

/* ---------- sheet data ---------- */
type Cell = { t?: string; cs?: number; rs?: number; fill?: boolean; b?: boolean; r?: boolean; kind?: string; sel?: boolean };
type SheetRow = { h: number; cells: Cell[] };
type Sheet = { cols: [string, number][]; rows: SheetRow[]; selected?: boolean };

const blank = (n: number, extra: Cell = {}): Cell[] => Array.from({ length: n }, () => extra);
const box = (t = "", extra: Cell = {}): Cell => ({ t, b: true, r: true, ...extra });
const head = (t: string, extra: Cell = {}): Cell => box(t, { fill: true, ...extra });

const overview: Sheet = {
  cols: [["A", 131], ["B", 294], ["C", 126], ["D", 126], ["E", 111], ["F", 106]],
  rows: [
    { h: 22, cells: [head("詳細設計書", { rs: 2, kind: "title" }), head("エンティティフロー定義", { cs: 5 })] },
    { h: 22, cells: [head("エンティティフロークラス名"), box("BT010EntityFlow", { cs: 4 })] },
    { h: 30, cells: blank(6) },
    { h: 22, cells: [{ t: "概要", kind: "bold", b: true }, ...blank(5, { b: true })] },
    { h: 112, cells: [{ t: "ジョブネットBT010を実装するクラス。", cs: 6, kind: "note", b: true }] },
    { h: 30, cells: blank(6) },
    { h: 22, cells: [{ t: "フロー図", kind: "bold" }, ...blank(5)] },
    { h: 22, cells: blank(6) },
    ...Array.from({ length: 14 }, () => ({ h: 30, cells: blank(6) })),
  ],
};

const props: [string, string, string, string, string][] = [
  ["ordrNO", "受注番号", "1", "String", "12"],
  ["ordrSub_NO", "受注番号枝番", "2", "Integer", ""],
  ["custCD", "顧客コード", "", "String", "12"],
  ["destCD", "届け先コード", "", "Integer", ""],
  ["ordrDY", "受注日・時刻", "", "Date", ""],
  ["sykkTM", "出荷タイミング", "", "Integer", ""],
  ["ordrGK", "受注合計金額", "", "BigDecima", "13"],
  ["ordrNU", "受注明細行数", "", "Integer", ""],
  ["destAddrYB", "届け先住所郵便", "", "String", "7"],
  ["destAddrJS", "届け先住所", "", "String", "60"],
  ["destAddrJM", "届け先住所明細", "", "String", "120"],
  ["destTel_NO", "届け先電話番号", "", "String", "13"],
  ["custNM", "顧客名", "", "String", "120"],
  ["sykkDY", "出荷日", "", "Date", ""],
  ["kssaKB", "決済方法区分", "", "Integer", ""],
];

const definition: Sheet = {
  selected: true,
  cols: [["A", 151], ["B", 294], ["C", 147], ["D", 66], ["E", 90], ["F", 90], ["G", 107]],
  rows: [
    { h: 22, cells: [head("詳細設計書", { rs: 2, kind: "title", sel: true }), head("処理定義", { cs: 5 }), head("処理種別")] },
    { h: 22, cells: [head("エンティティフロークラス名"), box("BT010EntityFlow", { cs: 4 }), head("処理名")] },
    { h: 30, cells: blank(7) },
    { h: 22, cells: [{ t: "概要", kind: "bold", b: true }, ...blank(6, { b: true })] },
    { h: 112, cells: [{ t: "ジョブP010-1（後半）\n受注情報と顧客マスタを結合する。", cs: 7, kind: "note", b: true }] },
    { h: 30, cells: blank(7) },
    { h: 30, cells: blank(7) },
    { h: 22, cells: [{ t: "入力定義", kind: "bold", b: true }, ...blank(6, { b: true })] },
    { h: 22, cells: [head("エンティティ"), box("P010_1_PRE（届け先情報初期付加ビューを表すエンティティ）", { cs: 6 })] },
    { h: 22, cells: [head("入力項目"), ...blank(6, { b: true })] },
    { h: 22, cells: ["No.", "プロパティ名", "列名", "キー", "型", "長さ", "小数部"].map((t) => head(t)) },
    ...props.map(([name, col, key, type, len], i) => ({
      h: 22,
      cells: [box(String(i + 1), { kind: "num" }), box(name), box(col), box(key, { kind: "num" }), box(type), box(len, { kind: "num" }), box()],
    })),
    { h: 22, cells: blank(7) },
  ],
};

/* Half-width runs keep a fixed pitch of half an em next to the full-width characters. */
const CellText = ({ text }: { text: string }) => (
  <>{text.split(/([\x20-\x7e]+)/).filter(Boolean).map((part, i) => (/^[\x20-\x7e]/.test(part) ? <HalfWidth key={i}>{part}</HalfWidth> : part))}</>
);

const SheetTable = ({ sheet }: { sheet: Sheet }) => (
  <Table $w={38 + sheet.cols.reduce((s, c) => s + c[1], 0)}>
    <colgroup><col width={38} />{sheet.cols.map(([n, w]) => <col key={n} width={w} />)}</colgroup>
    <thead>
      <tr>
        <Corner aria-label="すべて選択"><svg width="23" height="22"><path d="M22 0v21H1z" fill="#b1b1b1" /></svg></Corner>
        {sheet.cols.map(([n], i) => <ColHead key={n} scope="col" $on={sheet.selected && i === 0}>{n}</ColHead>)}
      </tr>
    </thead>
    <tbody>
      {sheet.rows.map((row, i) => (
        <Tr key={i} $h={row.h}>
          <RowHead scope="row" $on={sheet.selected && i < 2}>{i + 1}</RowHead>
          {row.cells.map((c, j) => (
            <Td key={j} colSpan={c.cs} rowSpan={c.rs} $fill={c.fill} $b={c.b} $r={c.r} $kind={c.kind} $sel={c.sel}>{c.t && <CellText text={c.t} />}{c.sel && <Selection />}</Td>
          ))}
        </Tr>
      ))}
    </tbody>
  </Table>
);

const FlowDiagram = () => (
  <Canvas>
    <svg width="932" height="730" viewBox="0 242 932 730" stroke="#000" strokeWidth="1.200" fill="none">
      <path d="M639.500 657L632 832M542 873L497 972M631.500 900L631 972M721 870L766 972M351 908L349 972" /><path d="M627 830h9.500l-5 9z" fill="#000" stroke="none" />
    </svg>
    <FlowNode $x={549} $y={353} $color="#c0ffc0">{"ordr\n:getInput"}</FlowNode>
    <FlowNode $x={542} $y={596} $color="#ffd0d0">{"ordrFiltered\n:Conversion"}</FlowNode>
    <FlowNode $x={260} $y={604} $color="#c0ffc0">{"ordrDetl\n:getInput"}</FlowNode>
  </Canvas>
);

const tabs: [string, number, number][] = [
  ["ファイル", 72, 13], ["ホーム", 63, 13], ["挿入", 60, 15], ["ページ レイアウト", 125, 13], ["数式", 59, 15],
  ["データ", 63, 13], ["校閲", 60, 15], ["表示", 57, 15], ["AZAREA_Rule", 130, 16],
];

type WinProps = { no: number; active: boolean; tab: string; cell: string; formula: string; sheet: Sheet; vThumb: number; hThumb: number; count?: string; openTab?: boolean; children?: React.ReactNode; ribbon: React.ReactNode };

const ExcelWindow = (p: WinProps) => (
  <WindowFrame $active={p.active}>
    <TitleBar>
      <QuickAccess>
        <Slot $w={52} aria-label="上書き保存"><SaveIcon /></Slot>
        <Slot $w={28} aria-label="元に戻す"><UndoIcon /></Slot><Slot $w={26} aria-label="元に戻す履歴"><Caret c="#4f9370" /></Slot>
        <Slot $w={28} aria-label="やり直し"><UndoIcon flip /></Slot><Slot $w={36} aria-label="やり直し履歴"><Caret c="#4f9370" /></Slot>
        <Slot $w={8} aria-label="クイック アクセスのカスタマイズ"><svg width="6" height="7" fill="#fff"><path d="M0 0h6v1H0zM0 3h6L3 6.500z" /></svg></Slot>
      </QuickAccess>
      <Title $active={p.active}>Document(BT010EntityFlow).xlsx:{p.no} - Excel</Title>
      <Controls $active={p.active}><WinControls /></Controls>
    </TitleBar>
    <TabBar>
      {tabs.map(([t, w, s]) => <RibbonTab key={t} $w={w} $on={t === p.tab} $size={s}>{t}</RibbonTab>)}
      <Tell><Bulb />操作アシスト…</Tell>
      <Share><Person />共有</Share>
    </TabBar>
    {p.ribbon}
    <FormulaBar>
      <Box $w={127}><BoxInput aria-label="名前ボックス" $pad={6} defaultValue={p.cell} /><BoxButton $w={24} aria-label="名前の一覧"><Caret /></BoxButton></Box>
      <Grip $w={37} $h={36}><Dots /></Grip>
      <Box $w={137}>
        <BoxButton $w={44} aria-label="キャンセル"><svg width="16" height="14" stroke="#c0c0c0" strokeWidth="1.800"><path d="M1 1l14 12M15 1L1 13" /></svg></BoxButton>
        <BoxButton $w={46} aria-label="入力"><svg width="18" height="14" fill="none" stroke="#c0c0c0" strokeWidth="3"><path d="M1.500 7l5 5L16 1.500" /></svg></BoxButton>
        <BoxButton $w={43} aria-label="関数の挿入"><Glyph $italic $size={21}>fx</Glyph></BoxButton>
      </Box>
      <Grip $w={3} $h={36} />
      <Box><BoxInput aria-label="数式バー" $pad={15} defaultValue={p.formula} /><BoxButton $w={20} aria-label="数式バーの展開"><ChevronDown /></BoxButton></Box>
    </FormulaBar>
    <SheetArea>
      <SheetPane><SheetView><SheetTable sheet={p.sheet} />{p.children}</SheetView></SheetPane>
      <VScroll>
        <ScrollButton aria-label="上へ"><Tri dir="u" /></ScrollButton>
        <Track><VThumb $h={p.vThumb} /></Track>
        <ScrollButton aria-label="下へ"><Tri dir="d" /></ScrollButton>
      </VScroll>
    </SheetArea>
    <SheetTabs>
      <NavArrows><button aria-label="前のシート"><Tri dir="l" c="#bbb" /></button><button aria-label="次のシート"><Tri dir="r" c={green} /></button></NavArrows>
      <SheetTab $w={59} $on={p.openTab} $line={!p.openTab}>概要</SheetTab>
      <SheetTab $w={92} $line>改訂履歴</SheetTab>
      <SheetTab $w={214} $line>処理定義(ordrFiltered)</SheetTab>
      <TabClip>処理</TabClip>
      <More aria-label="その他のシート">…</More>
      <AddSheet aria-label="新しいシート"><svg width="22" height="22" fill="none" stroke="#777"><circle cx="11" cy="11" r="9.500" strokeWidth="1.300" /><path d="M6 11h10M11 6v10" strokeWidth="2" /></svg></AddSheet>
      <Grip $w={33} $h={28}><Dots /></Grip>
      <HArea>
        <HScroll>
          <ScrollButton aria-label="左へ"><Tri dir="l" /></ScrollButton>
          <Track><HThumb $w={p.hThumb} /></Track>
          <ScrollButton aria-label="右へ"><Tri dir="r" /></ScrollButton>
        </HScroll>
      </HArea>
    </SheetTabs>
    <StatusBar>
      <span>準備完了</span>
      <Count>{p.count}</Count>
      <ViewButton $on aria-label="標準"><svg width="13" height="13" fill="none" stroke="#777" shapeRendering="crispEdges"><path d="M.5.500h12v12H.500zM4.500 0v13M8.500 0v13M0 4.500h13M0 8.500h13" /></svg></ViewButton>
      <ViewButton aria-label="ページ レイアウト"><svg width="14" height="13" fill="none" stroke="#777" shapeRendering="crispEdges"><path d="M.5.500h13v12H.500zM3.500 2.500h7v8h-7zM5 4.500h4M5 6.500h4M5 8.500h4" /></svg></ViewButton>
      <ViewButton aria-label="改ページ プレビュー"><svg width="14" height="13" fill="none" stroke="#777" shapeRendering="crispEdges"><path d="M.5.500h13v12H.500zM4.500 0v7.500H.500M9.500 0v7.500H4.500" /></svg></ViewButton>
      <ZoomStep aria-label="縮小"><svg width="9" height="3"><path d="M0 0h9v2H0z" fill="#666" /></svg></ZoomStep>
      <Slider type="range" aria-label="ズーム" min={0} max={100} defaultValue={50} />
      <ZoomStep aria-label="拡大"><svg width="11" height="11" fill="#666"><path d="M4.500 0h2v4.500H11v2H6.500V11h-2V6.500H0v-2h4.500z" /></svg></ZoomStep>
      <Percent>100%</Percent>
    </StatusBar>
  </WindowFrame>
);

export default function App() {
  return (
    <>
      <Global />
      <Desktop>
        <ExcelWindow no={1} active={false} tab="表示" cell="I16" formula="" sheet={overview} vThumb={274} hThumb={139} openTab ribbon={<ViewRibbon />}>
          <FlowDiagram />
        </ExcelWindow>
        <Divider />
        <ExcelWindow no={2} active tab="ホーム" cell="A1" formula="詳細設計書" sheet={definition} vThumb={278} hThumb={102} count="データの個数: 2" ribbon={<HomeRibbon />} />
      </Desktop>
    </>
  );
}
